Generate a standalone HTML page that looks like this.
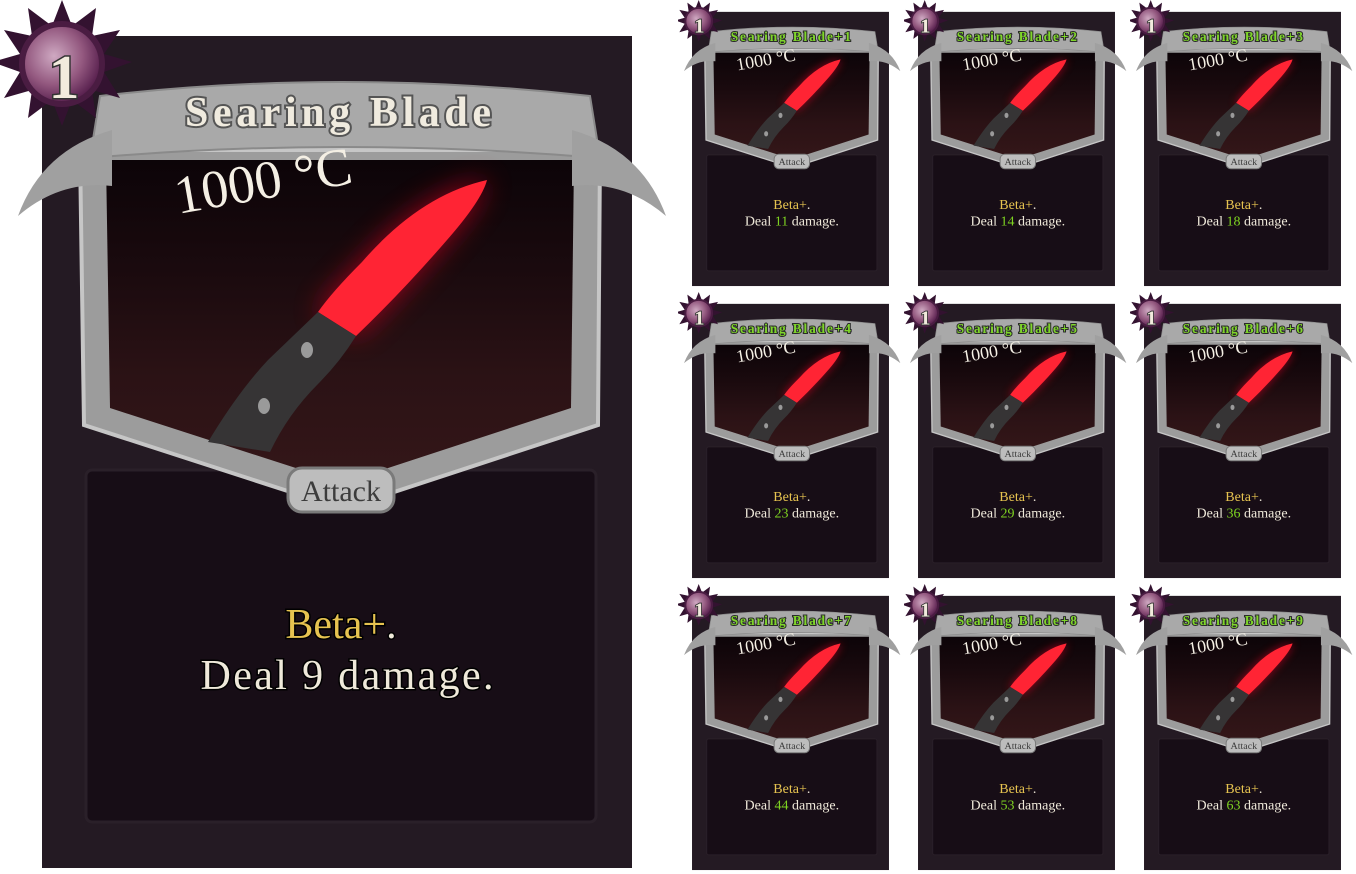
<!DOCTYPE html>
<html><head><meta charset="utf-8"><style>
html,body{margin:0;padding:0;background:#fff;width:1356px;height:874px;overflow:hidden;position:relative}
svg.card{position:absolute}
text{font-family:"Liberation Serif",serif}
</style></head><body>
<svg width="0" height="0" style="position:absolute">
<defs>
<linearGradient id="artg" x1="0" y1="0" x2="0" y2="1">
<stop offset="0" stop-color="#0c0408"/><stop offset="0.35" stop-color="#1a0a0e"/><stop offset="0.7" stop-color="#2b1215"/><stop offset="1" stop-color="#331618"/></linearGradient>
<radialGradient id="orb" cx="0.4" cy="0.4" r="0.6"><stop offset="0" stop-color="#cfa9c2"/><stop offset="0.6" stop-color="#93587f"/><stop offset="1" stop-color="#5a2250"/></radialGradient>
<filter id="glow" x="-50%" y="-50%" width="200%" height="200%"><feGaussianBlur stdDeviation="14"/></filter>
<symbol id="art" viewBox="0 0 680 880">
<rect x="42" y="36" width="590" height="832" fill="#241a23"/>
<rect x="86" y="470" width="510" height="352" rx="6" fill="#170d16" stroke="#2a2029" stroke-width="3"/>
<path d="M80,150 L600,150 L598,425 L385,495 L300,495 L84,425 Z" fill="#9c9c9c" stroke="#c6c6c6" stroke-width="4"/>
<path d="M106,160 L574,160 L571,408 L382,470 L302,470 L110,408 Z" fill="url(#artg)"/>
<path d="M487,180 Q420,195 362,262 Q332,292 318,312 L356,336 Q402,292 447,240 Q482,200 487,180 Z" fill="#d01020" opacity="0.7" filter="url(#glow)"/>
<path d="M487,180 Q420,195 362,262 Q332,292 318,312 L356,336 Q402,292 447,240 Q482,200 487,180 Z" fill="#ff2434"/>
<path d="M318,312 L356,336 Q340,362 318,384 Q288,414 270,452 L208,442 Q238,392 268,360 Z" fill="#363435"/>
<ellipse cx="307" cy="350" rx="6" ry="8" fill="#9a9a9a"/>
<ellipse cx="264" cy="406" rx="6" ry="8" fill="#9a9a9a"/>
<path d="M100,96 Q340,68 590,96 L600,158 Q340,136 90,158 Z" fill="#a9a9a9" stroke="#8a8a8a" stroke-width="2"/>
<path d="M112,130 Q42,150 18,216 Q60,180 112,186 Z" fill="#a0a0a0"/>
<path d="M572,130 Q642,150 666,216 Q624,180 572,186 Z" fill="#a0a0a0"/>
<rect x="288" y="468" width="106" height="44" rx="14" fill="#bdbdbd" stroke="#7a7a7a" stroke-width="3"/>
<polygon points="62,0 72,26 96,8 92,36 120,30 104,54 132,62 104,72 120,98 92,90 96,118 72,100 62,126 52,100 28,118 32,90 4,98 20,72 -8,62 20,54 4,30 32,36 28,8 52,26" fill="#331230"/>
<circle cx="62" cy="64" r="40" fill="url(#orb)" stroke="#4a1c42" stroke-width="6"/>
</symbol>
</defs></svg>

<svg class="card" style="left:0;top:0" width="680" height="880" viewBox="0 0 680 880">
<use href="#art" width="680" height="880"/>
<text x="178" y="214" font-family="Liberation Sans,sans-serif" font-size="54" fill="#f4efe4" transform="rotate(-10 178 214)">1000 °C</text>
<text x="64" y="98" text-anchor="middle" font-size="62" font-weight="bold" fill="#f2ebdd" stroke="#333" stroke-width="3" paint-order="stroke">1</text>
<text x="338" y="126" text-anchor="middle" font-size="42" font-weight="bold" fill="#f0ebdf" stroke="#555" stroke-width="4" paint-order="stroke" textLength="306">Searing Blade</text>
<text x="341" y="501" text-anchor="middle" font-size="30" fill="#3c3c3c">Attack</text>
<text x="341" y="638" text-anchor="middle" font-size="42" fill="#e6c350" stroke="#000" stroke-width="3" paint-order="stroke">Beta+<tspan fill="#efe9da">.</tspan></text>
<text x="347" y="689" text-anchor="middle" font-size="42" fill="#efe9da" stroke="#000" stroke-width="3" paint-order="stroke" textLength="293">Deal 9 damage.</text>
</svg>

<svg class="card" style="left:678px;top:0" width="227" height="290" viewBox="0 0 680 880" preserveAspectRatio="none"><use href="#art" width="680" height="880"/><text x="178" y="214" font-family="Liberation Sans,sans-serif" font-size="54" fill="#f4efe4" transform="rotate(-10 178 214)">1000 °C</text><text x="64" y="98" text-anchor="middle" font-size="62" font-weight="bold" fill="#f2ebdd" stroke="#333" stroke-width="5" paint-order="stroke">1</text><text x="338" y="124" text-anchor="middle" font-size="40" font-weight="bold" fill="#7fd62a" stroke="#2a2a2a" stroke-width="6" paint-order="stroke" textLength="360">Searing Blade+1</text><text x="341" y="500" text-anchor="middle" font-size="30" fill="#3c3c3c">Attack</text><text x="341" y="634" text-anchor="middle" font-size="42" fill="#e6c350">Beta+<tspan fill="#efe9da">.</tspan></text><text x="341" y="684" text-anchor="middle" font-size="42" fill="#efe9da">Deal <tspan fill="#7ed321">11</tspan> damage.</text></svg>
<svg class="card" style="left:904px;top:0" width="227" height="290" viewBox="0 0 680 880" preserveAspectRatio="none"><use href="#art" width="680" height="880"/><text x="178" y="214" font-family="Liberation Sans,sans-serif" font-size="54" fill="#f4efe4" transform="rotate(-10 178 214)">1000 °C</text><text x="64" y="98" text-anchor="middle" font-size="62" font-weight="bold" fill="#f2ebdd" stroke="#333" stroke-width="5" paint-order="stroke">1</text><text x="338" y="124" text-anchor="middle" font-size="40" font-weight="bold" fill="#7fd62a" stroke="#2a2a2a" stroke-width="6" paint-order="stroke" textLength="360">Searing Blade+2</text><text x="341" y="500" text-anchor="middle" font-size="30" fill="#3c3c3c">Attack</text><text x="341" y="634" text-anchor="middle" font-size="42" fill="#e6c350">Beta+<tspan fill="#efe9da">.</tspan></text><text x="341" y="684" text-anchor="middle" font-size="42" fill="#efe9da">Deal <tspan fill="#7ed321">14</tspan> damage.</text></svg>
<svg class="card" style="left:1130px;top:0" width="227" height="290" viewBox="0 0 680 880" preserveAspectRatio="none"><use href="#art" width="680" height="880"/><text x="178" y="214" font-family="Liberation Sans,sans-serif" font-size="54" fill="#f4efe4" transform="rotate(-10 178 214)">1000 °C</text><text x="64" y="98" text-anchor="middle" font-size="62" font-weight="bold" fill="#f2ebdd" stroke="#333" stroke-width="5" paint-order="stroke">1</text><text x="338" y="124" text-anchor="middle" font-size="40" font-weight="bold" fill="#7fd62a" stroke="#2a2a2a" stroke-width="6" paint-order="stroke" textLength="360">Searing Blade+3</text><text x="341" y="500" text-anchor="middle" font-size="30" fill="#3c3c3c">Attack</text><text x="341" y="634" text-anchor="middle" font-size="42" fill="#e6c350">Beta+<tspan fill="#efe9da">.</tspan></text><text x="341" y="684" text-anchor="middle" font-size="42" fill="#efe9da">Deal <tspan fill="#7ed321">18</tspan> damage.</text></svg>

<svg class="card" style="left:678px;top:292px" width="227" height="290" viewBox="0 0 680 880" preserveAspectRatio="none"><use href="#art" width="680" height="880"/><text x="178" y="214" font-family="Liberation Sans,sans-serif" font-size="54" fill="#f4efe4" transform="rotate(-10 178 214)">1000 °C</text><text x="64" y="98" text-anchor="middle" font-size="62" font-weight="bold" fill="#f2ebdd" stroke="#333" stroke-width="5" paint-order="stroke">1</text><text x="338" y="124" text-anchor="middle" font-size="40" font-weight="bold" fill="#7fd62a" stroke="#2a2a2a" stroke-width="6" paint-order="stroke" textLength="360">Searing Blade+4</text><text x="341" y="500" text-anchor="middle" font-size="30" fill="#3c3c3c">Attack</text><text x="341" y="634" text-anchor="middle" font-size="42" fill="#e6c350">Beta+<tspan fill="#efe9da">.</tspan></text><text x="341" y="684" text-anchor="middle" font-size="42" fill="#efe9da">Deal <tspan fill="#7ed321">23</tspan> damage.</text></svg>
<svg class="card" style="left:904px;top:292px" width="227" height="290" viewBox="0 0 680 880" preserveAspectRatio="none"><use href="#art" width="680" height="880"/><text x="178" y="214" font-family="Liberation Sans,sans-serif" font-size="54" fill="#f4efe4" transform="rotate(-10 178 214)">1000 °C</text><text x="64" y="98" text-anchor="middle" font-size="62" font-weight="bold" fill="#f2ebdd" stroke="#333" stroke-width="5" paint-order="stroke">1</text><text x="338" y="124" text-anchor="middle" font-size="40" font-weight="bold" fill="#7fd62a" stroke="#2a2a2a" stroke-width="6" paint-order="stroke" textLength="360">Searing Blade+5</text><text x="341" y="500" text-anchor="middle" font-size="30" fill="#3c3c3c">Attack</text><text x="341" y="634" text-anchor="middle" font-size="42" fill="#e6c350">Beta+<tspan fill="#efe9da">.</tspan></text><text x="341" y="684" text-anchor="middle" font-size="42" fill="#efe9da">Deal <tspan fill="#7ed321">29</tspan> damage.</text></svg>
<svg class="card" style="left:1130px;top:292px" width="227" height="290" viewBox="0 0 680 880" preserveAspectRatio="none"><use href="#art" width="680" height="880"/><text x="178" y="214" font-family="Liberation Sans,sans-serif" font-size="54" fill="#f4efe4" transform="rotate(-10 178 214)">1000 °C</text><text x="64" y="98" text-anchor="middle" font-size="62" font-weight="bold" fill="#f2ebdd" stroke="#333" stroke-width="5" paint-order="stroke">1</text><text x="338" y="124" text-anchor="middle" font-size="40" font-weight="bold" fill="#7fd62a" stroke="#2a2a2a" stroke-width="6" paint-order="stroke" textLength="360">Searing Blade+6</text><text x="341" y="500" text-anchor="middle" font-size="30" fill="#3c3c3c">Attack</text><text x="341" y="634" text-anchor="middle" font-size="42" fill="#e6c350">Beta+<tspan fill="#efe9da">.</tspan></text><text x="341" y="684" text-anchor="middle" font-size="42" fill="#efe9da">Deal <tspan fill="#7ed321">36</tspan> damage.</text></svg>

<svg class="card" style="left:678px;top:584px" width="227" height="290" viewBox="0 0 680 880" preserveAspectRatio="none"><use href="#art" width="680" height="880"/><text x="178" y="214" font-family="Liberation Sans,sans-serif" font-size="54" fill="#f4efe4" transform="rotate(-10 178 214)">1000 °C</text><text x="64" y="98" text-anchor="middle" font-size="62" font-weight="bold" fill="#f2ebdd" stroke="#333" stroke-width="5" paint-order="stroke">1</text><text x="338" y="124" text-anchor="middle" font-size="40" font-weight="bold" fill="#7fd62a" stroke="#2a2a2a" stroke-width="6" paint-order="stroke" textLength="360">Searing Blade+7</text><text x="341" y="500" text-anchor="middle" font-size="30" fill="#3c3c3c">Attack</text><text x="341" y="634" text-anchor="middle" font-size="42" fill="#e6c350">Beta+<tspan fill="#efe9da">.</tspan></text><text x="341" y="684" text-anchor="middle" font-size="42" fill="#efe9da">Deal <tspan fill="#7ed321">44</tspan> damage.</text></svg>
<svg class="card" style="left:904px;top:584px" width="227" height="290" viewBox="0 0 680 880" preserveAspectRatio="none"><use href="#art" width="680" height="880"/><text x="178" y="214" font-family="Liberation Sans,sans-serif" font-size="54" fill="#f4efe4" transform="rotate(-10 178 214)">1000 °C</text><text x="64" y="98" text-anchor="middle" font-size="62" font-weight="bold" fill="#f2ebdd" stroke="#333" stroke-width="5" paint-order="stroke">1</text><text x="338" y="124" text-anchor="middle" font-size="40" font-weight="bold" fill="#7fd62a" stroke="#2a2a2a" stroke-width="6" paint-order="stroke" textLength="360">Searing Blade+8</text><text x="341" y="500" text-anchor="middle" font-size="30" fill="#3c3c3c">Attack</text><text x="341" y="634" text-anchor="middle" font-size="42" fill="#e6c350">Beta+<tspan fill="#efe9da">.</tspan></text><text x="341" y="684" text-anchor="middle" font-size="42" fill="#efe9da">Deal <tspan fill="#7ed321">53</tspan> damage.</text></svg>
<svg class="card" style="left:1130px;top:584px" width="227" height="290" viewBox="0 0 680 880" preserveAspectRatio="none"><use href="#art" width="680" height="880"/><text x="178" y="214" font-family="Liberation Sans,sans-serif" font-size="54" fill="#f4efe4" transform="rotate(-10 178 214)">1000 °C</text><text x="64" y="98" text-anchor="middle" font-size="62" font-weight="bold" fill="#f2ebdd" stroke="#333" stroke-width="5" paint-order="stroke">1</text><text x="338" y="124" text-anchor="middle" font-size="40" font-weight="bold" fill="#7fd62a" stroke="#2a2a2a" stroke-width="6" paint-order="stroke" textLength="360">Searing Blade+9</text><text x="341" y="500" text-anchor="middle" font-size="30" fill="#3c3c3c">Attack</text><text x="341" y="634" text-anchor="middle" font-size="42" fill="#e6c350">Beta+<tspan fill="#efe9da">.</tspan></text><text x="341" y="684" text-anchor="middle" font-size="42" fill="#efe9da">Deal <tspan fill="#7ed321">63</tspan> damage.</text></svg>
</body></html>
